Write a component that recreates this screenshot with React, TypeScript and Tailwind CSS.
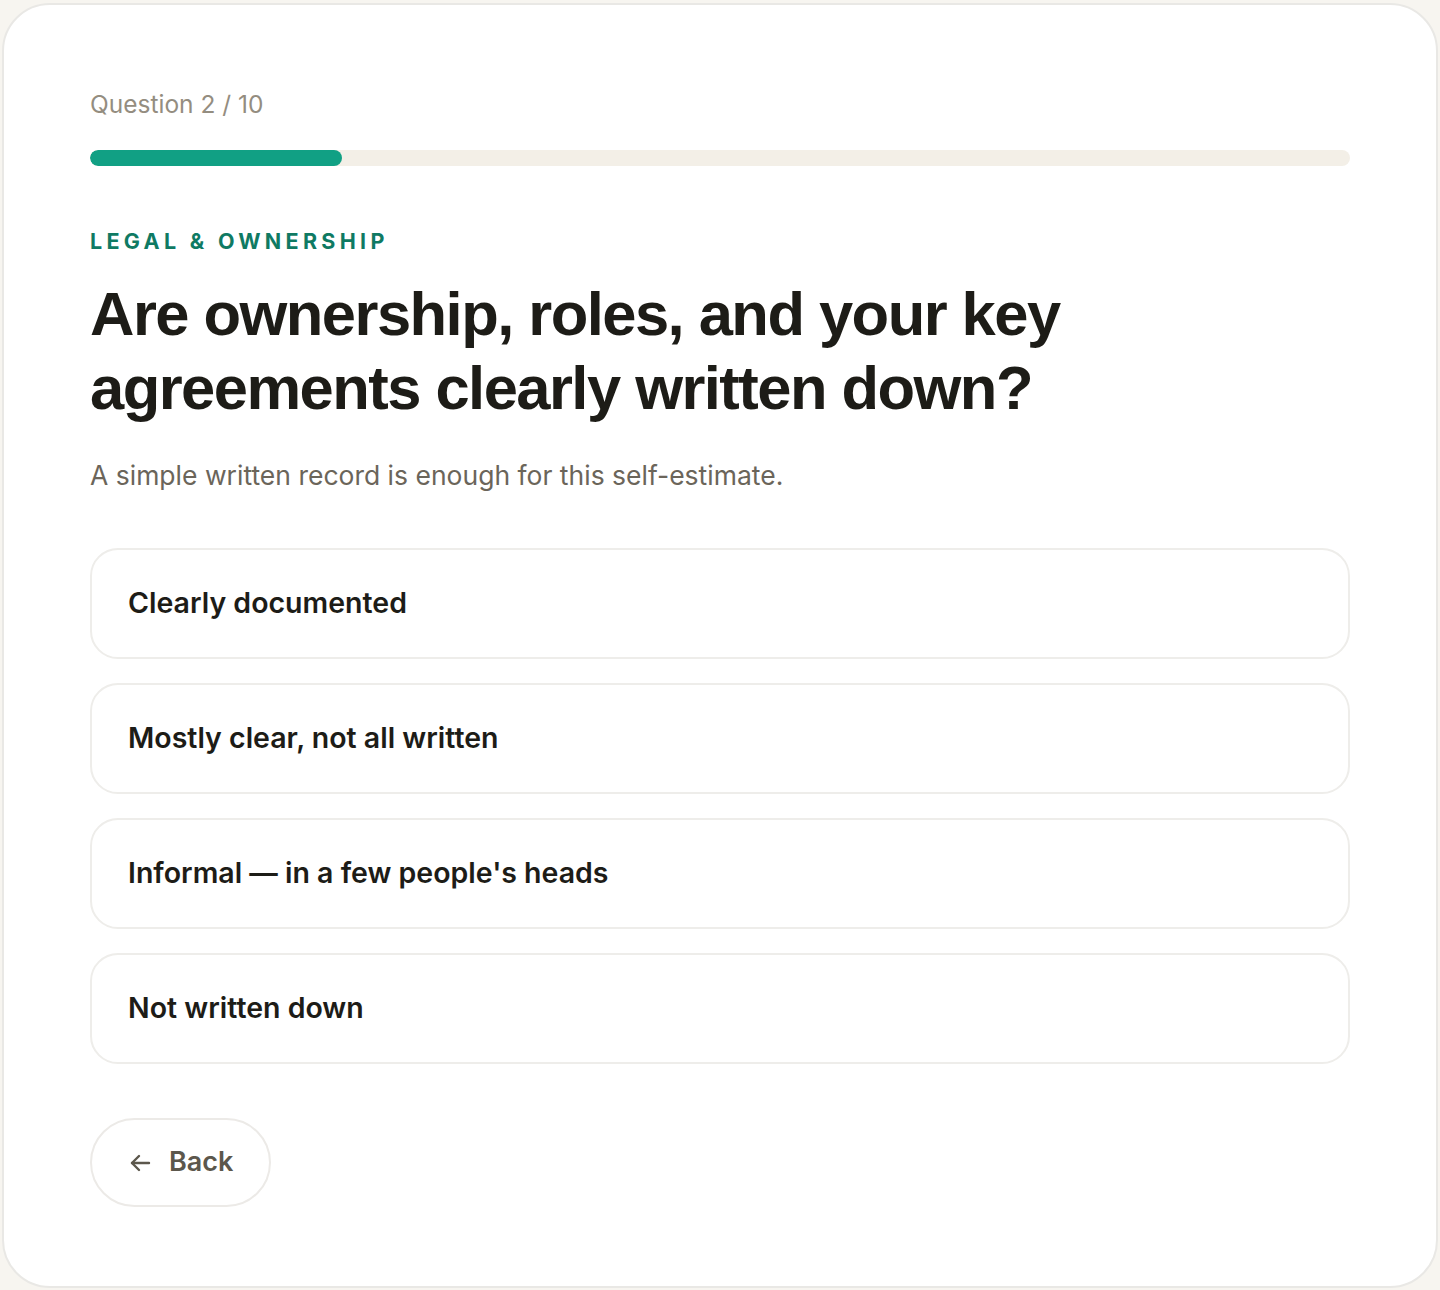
import React from "react";

const options = [
  "Clearly documented",
  "Mostly clear, not all written",
  "Informal — in a few people's heads",
  "Not written down",
];

export default function App() {
  const progress = 20;
  return (
    <div className="min-h-[1290px] bg-[#f7f5f0] pt-[3px] px-[2px] pb-[2px]" style={{ fontFamily: "Inter, 'Noto Sans', sans-serif" }}>
      <div className="h-[1285px] bg-white border-2 border-[#e9e8e5] rounded-[48px] px-[86px] pt-[83px]">
        <div className="text-[24.5px] leading-[32px] text-[#948d80]">Question 2 / 10</div>
        <div className="mt-[30px] h-[16px] w-full rounded-full bg-[#f3efe7] overflow-hidden">
          <div className="h-full rounded-full bg-[#11a084]" style={{ width: `${progress}%` }} />
        </div>
        <div className="mt-[63px] text-[21.5px] leading-[24px] font-bold tracking-[0.2em] text-[#0f7a63]">
          LEGAL &amp; OWNERSHIP
        </div>
        <h1
          className="mt-[24px] text-[61.5px] leading-[74px] font-bold tracking-[-0.025em] text-[#1d1c17]"
          style={{ fontFamily: "'Liberation Sans', Arial, sans-serif" }}
        >
          Are ownership, roles, and your key
          <br />
          agreements clearly written down?
        </h1>
        <p className="mt-[32px] text-[26.5px] leading-[36px] text-[#6b655a]">
          A simple written record is enough for this self-estimate.
        </p>
        <div className="mt-[55px] flex flex-col gap-[24px]">
          {options.map((o) => (
            <button
              key={o}
              className="h-[111px] w-full text-left rounded-[28px] border-2 border-[#eeedea] bg-white px-[36px] text-[28.5px] font-semibold text-[#1d1c17]"
            >
              {o}
            </button>
          ))}
        </div>
        <button className="mt-[54px] h-[89px] w-[181px] rounded-full border-2 border-[#eceae7] bg-white flex items-center gap-[17px] pl-[36px] text-[27px] font-semibold text-[#5c574c]">
          <svg width="24" height="24" viewBox="0 0 24 24" fill="none" stroke="currentColor" strokeWidth="2.4" strokeLinecap="round" strokeLinejoin="round">
            <path d="M21 12H4" />
            <path d="M11 5l-7 7 7 7" />
          </svg>
          <span>Back</span>
        </button>
      </div>
    </div>
  );
}
